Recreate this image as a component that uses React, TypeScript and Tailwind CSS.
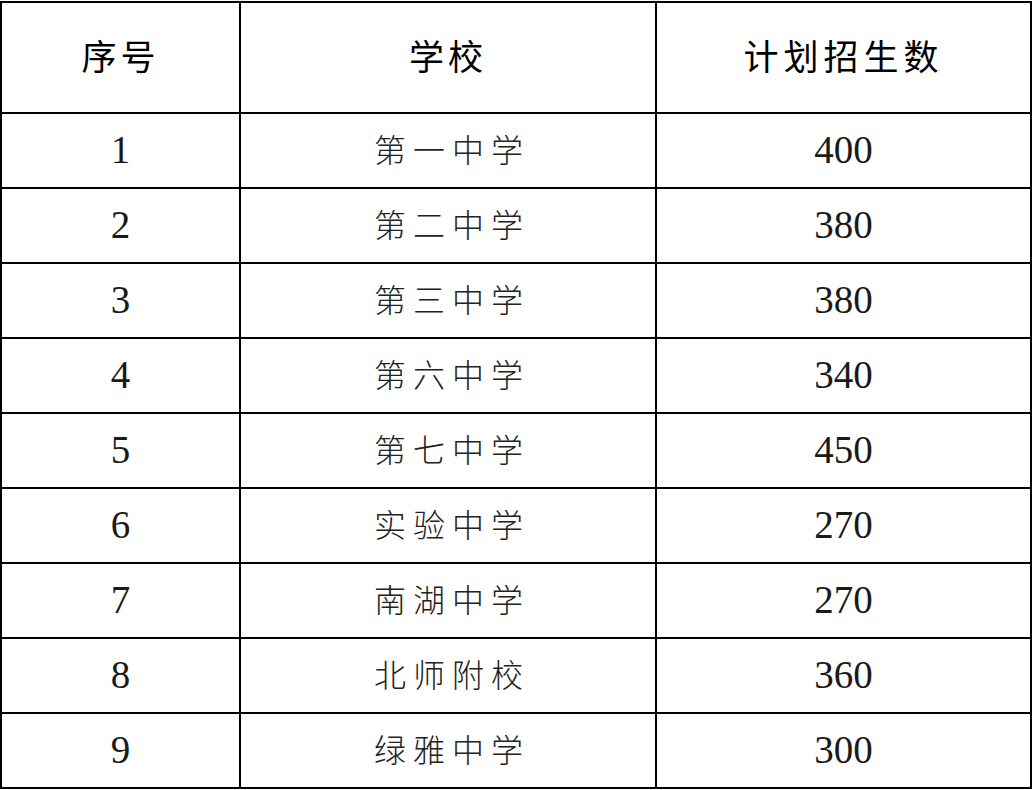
import React from 'react';

const rows: [number, string, number][] = [
  [1, '第一中学', 400],
  [2, '第二中学', 380],
  [3, '第三中学', 380],
  [4, '第六中学', 340],
  [5, '第七中学', 450],
  [6, '实验中学', 270],
  [7, '南湖中学', 270],
  [8, '北师附校', 360],
  [9, '绿雅中学', 300],
];

const cjk = '[font-family:"Liberation_Serif","Noto_Sans_CJK_SC",serif]';

export default function App() {
  return (
    <div className="bg-white w-[1032px] h-[790px] pt-px">
      <table className={`border-collapse table-fixed w-[1030px] text-black ${cjk}`}>
        <colgroup>
          <col className="w-[239px]" />
          <col className="w-[416px]" />
          <col className="w-[375px]" />
        </colgroup>
        <thead>
          <tr className="h-[111px]">
            <th className="border-2 border-black font-normal text-[35px] tracking-[4px] pt-1">序号</th>
            <th className="border-2 border-black font-normal text-[35px] tracking-[4px] pt-1">学校</th>
            <th className="border-2 border-black font-normal text-[35px] tracking-[5px] pt-1">计划招生数</th>
          </tr>
        </thead>
        <tbody>
          {rows.map(([no, school, count]) => (
            <tr key={no} className="h-[75px]">
              <td className="border-2 border-black text-center text-[39px] text-[#1a1a1a]">{no}</td>
              <td className="border-2 border-black text-center text-[32px] tracking-[7px] pl-2 font-light text-[#222]">
                {school}
              </td>
              <td className="border-2 border-black text-center text-[39px] text-[#1a1a1a]">{count}</td>
            </tr>
          ))}
        </tbody>
      </table>
    </div>
  );
}
